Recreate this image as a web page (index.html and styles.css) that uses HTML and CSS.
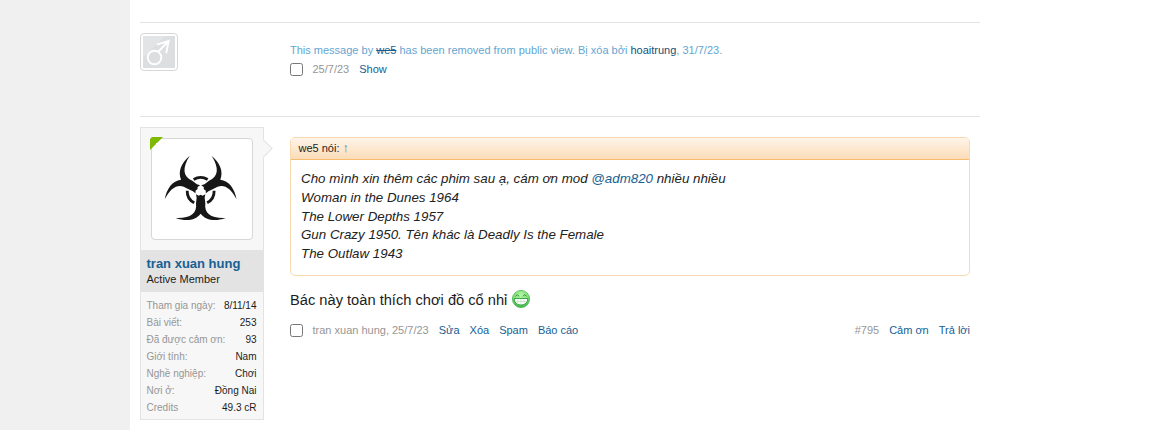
FILE: index.html
```
<!DOCTYPE html>
<html lang="vi">
<head>
<meta charset="utf-8">
<title>Thread</title>
<link rel="stylesheet" href="styles.css">
</head>
<body>
<main class="page">
  <article class="message deleted">
    <div class="small-avatar">
      <svg viewBox="0 0 32 32" width="32" height="32"><rect width="32" height="32" fill="#dcdee0"/><path d="M0 0H22L0 22Z" fill="#e2e4e5"/><g fill="none" stroke="#fff" stroke-width="1.900"><circle cx="11.500" cy="21.500" r="6.800"/><path d="M15.500 15.500L25 5.500M13.700 8.700L25.700 5L23.200 17.300"/></g></svg>
    </div>
    <div class="content">
      <p class="notice">This message by <a class="struck">we5</a> has been removed from public view. Bị xóa bởi <a>hoaitrung</a>, 31/7/23.</p>
      <div class="meta"><i class="check"></i><span class="muted">25/7/23</span><a>Show</a></div>
    </div>
  </article>
  <article class="message post">
    <aside class="user">
      <span class="arrow"></span>
      <div class="avatar-holder">
        <div class="avatar">
          <svg viewBox="6 12 300 300" width="100" height="100">
            <defs><path id="arm" d="M138 178L146 182L152 179L158 182L166 178L164 188L166 205C162 236 184 251 227 249C196 260 168 257 152 236C136 257 108 260 77 249C120 251 142 236 138 205L140 188Z"/></defs>
            <g fill="#171717"><use href="#arm"/><use href="#arm" transform="rotate(120 152 168)"/><use href="#arm" transform="rotate(240 152 168)"/></g>
            <circle cx="152" cy="168" r="10" fill="#fff"/>
            <g fill="none" stroke="#171717" stroke-width="8.500"><path id="arc" d="M131 133.500A40 40 0 0 1 173 133.500"/><use href="#arc" transform="rotate(120 152 168)"/><use href="#arc" transform="rotate(240 152 168)"/></g>
          </svg>
        </div>
        <span class="online"></span>
      </div>
      <div class="user-text"><a class="name">tran xuan hung</a><span class="title">Active Member</span></div>
      <dl class="stats">
        <div><dt>Tham gia ngày:</dt><dd>8/11/14</dd></div>
        <div><dt>Bài viết:</dt><dd>253</dd></div>
        <div><dt>Đã được cảm ơn:</dt><dd>93</dd></div>
        <div><dt>Giới tính:</dt><dd>Nam</dd></div>
        <div><dt>Nghề nghiệp:</dt><dd>Chơi</dd></div>
        <div><dt>Nơi ở:</dt><dd>Đồng Nai</dd></div>
        <div><dt>Credits</dt><dd>49.3 cR</dd></div>
      </dl>
    </aside>
    <div class="content">
      <blockquote class="quote">
        <header>we5 nói: <a>↑</a></header>
        <p>Cho mình xin thêm các phim sau ạ, cám ơn mod <a>@adm820</a> nhiều nhiều<br>Woman in the Dunes 1964<br>The Lower Depths 1957<br>Gun Crazy 1950. Tên khác là Deadly Is the Female<br>The Outlaw 1943</p>
      </blockquote>
      <p class="body"><span>Bác này toàn thích chơi đồ cổ nhỉ</span>
        <svg viewBox="0 0 18 18" width="18" height="18"><defs><radialGradient id="face" cx=".5" cy=".3" r=".7"><stop offset="0" stop-color="#b9f5a8"/><stop offset=".65" stop-color="#78df70"/><stop offset="1" stop-color="#37b046"/></radialGradient></defs><circle cx="9" cy="9" r="8.600" fill="url(#face)" stroke="#4cb455" stroke-width=".8"/><path d="M3.500 6.300Q5.300 3.300 7.200 6.300M10.800 6.300Q12.700 3.300 14.500 6.300" fill="none" stroke="#2c8a37" stroke-width=".9"/><path d="M2.200 8.500H15.800Q15.400 15 9 15T2.200 8.500Z" fill="#fff" stroke="#2f9c42" stroke-width=".9"/><path d="M3.500 11.500H14.500M6 9V13.500M9 9V14.500M12 9V13.500" stroke="#a2d7a3" stroke-width=".5"/></svg>
      </p>
      <div class="meta"><i class="check"></i><span class="muted"><span class="author">tran xuan hung</span>, 25/7/23</span><a>Sửa</a><a>Xóa</a><a>Spam</a><a>Báo cáo</a><span class="muted permalink">#795</span><a>Cảm ơn</a><a>Trả lời</a></div>
    </div>
  </article>
</main>
</body>
</html>
```
FILE: styles.css
```
* { box-sizing: border-box; }
body { margin: 0; height: 430px; overflow: hidden; background: #f0f0f0; color: #1c1c1c; font-family: "Liberation Sans", Arial, sans-serif; }
p, dl, dd, blockquote { margin: 0; }
a { color: #176093; }
svg { display: block; }
.page { margin-left: 130px; height: 430px; padding: 22px 175px 0 10px; background: #fff; }
.message { display: flex; border-top: 1px solid #e3e3e3; padding-top: 10px; }
.deleted { height: 94px; }
.small-avatar { width: 38px; height: 38px; padding: 2px; border: 1px solid #d7d7d7; border-radius: 4px; margin-right: 112px; flex: none; }
.content { flex: 1; padding-right: 10px; }
.deleted .content { padding-top: 10px; }
.notice { font-size: 11px; line-height: 14px; color: #65a5d1; white-space: nowrap; }
.notice a { color: #144f7b; }
.notice .struck { text-decoration: line-through; color: #176093; }
.meta { display: flex; align-items: center; gap: 10px; font-size: 11px; line-height: 14px; white-space: nowrap; }
.deleted .meta { margin-top: 5px; }
.check { width: 13px; height: 13px; margin-right: -.5px; border: 1px solid #767676; border-radius: 2.5px; background: #fff; }
.muted { color: #969696; }
.permalink { margin-left: auto; }
.user { position: relative; width: 124px; height: 293px; flex: none; margin-right: 26px; border: 1px solid #e3e3e3; background: #f7f7f7; }
.arrow { position: absolute; top: 14px; right: -7px; width: 13px; height: 13px; border: 1px solid #e3e3e3; border-left: 0; border-bottom: 0; background: #f7f7f7; transform: rotate(45deg); }
.avatar-holder { position: relative; padding: 10px; height: 122px; }
.avatar { width: 102px; height: 102px; border: 1px solid #d7d7d7; border-radius: 4px; background: #fff; }
.online { position: absolute; left: 9px; top: 9px; width: 13px; height: 13px; border: 6.5px solid transparent; border-top-color: #7fb900; border-left-color: #7fb900; border-top-left-radius: 4px; }
.user-text { height: 42px; padding: 6px 5.5px 0; background: #e3e3e3; display: flex; flex-direction: column; }
.name { font-size: 13px; font-weight: bold; line-height: 16px; }
.title { font-size: 11px; line-height: 14px; }
.stats { padding: 5px 6.5px 5px 5.5px; font-size: 10px; }
.stats div { display: flex; justify-content: space-between; line-height: 17px; }
.stats dt { color: #969696; }
.post .content { padding-top: 10px; }
.quote { height: 139px; border: 1px solid #f9d9b0; border-radius: 5px; overflow: hidden; }
.quote header { height: 22px; padding: 3px 7.5px; font-size: 11px; line-height: 15px; border-bottom: 1px solid #f9bc6d; background: linear-gradient(#fff4e9, #fbdcb8); }
.quote header a { font-size: 13px; line-height: 1; color: #4a84ac; }
.quote p { padding: 10px; font-size: 13.33px; font-style: italic; line-height: 18.75px; color: #222; }
.quote p a { color: #176093; }
.body { display: flex; align-items: center; gap: 5px; margin-top: 12px; height: 22px; font-size: 14.67px; }
.body span { padding-top: 2px; }
.post .meta { margin-top: 13px; }
```
